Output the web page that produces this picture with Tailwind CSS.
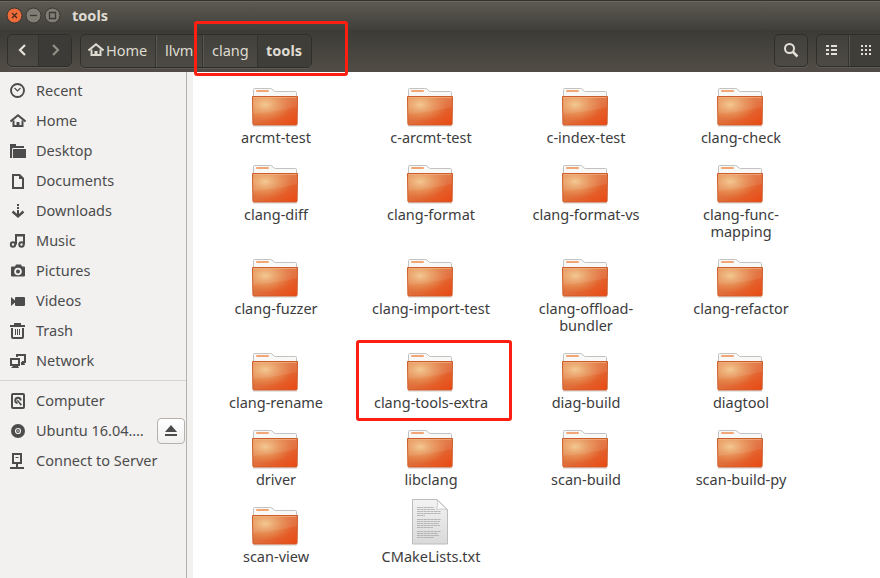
<!DOCTYPE html>
<html lang="en">
<head>
<meta charset="utf-8">
<title>tools</title>
<script src="https://cdn.jsdelivr.net/npm/@tailwindcss/browser@4"></script>
</head>
<body class="relative w-[880px] h-[578px] overflow-hidden bg-white font-['Noto_Sans','Open_Sans',sans-serif] text-[14.5px]">
<svg class="absolute w-0 h-0" aria-hidden="true">
  <defs>
    <linearGradient id="fg" x1="0" y1="0" x2="1" y2="1"><stop offset="0" stop-color="#e5844a"/><stop offset=".5" stop-color="#e06e3a"/><stop offset="1" stop-color="#ea4711"/></linearGradient>
    <radialGradient id="fr" cx=".28" cy=".28" r=".62"><stop offset="0" stop-color="#f5d297" stop-opacity=".85"/><stop offset="1" stop-color="#eda45e" stop-opacity="0"/></radialGradient>
    <linearGradient id="pg" x1="0" y1="0" x2="0" y2="1"><stop offset="0" stop-color="#f3f3f3"/><stop offset="1" stop-color="#d9d9d9"/></linearGradient>
  </defs>
  <symbol id="folder" viewBox="0 0 48 48">
    <path d="M2.500 16V7.500q0-1 1-1h16q1.500 0 2.500 1.500t2.500 1.500h20q1 0 1 1V16z" fill="#f8f8f7" stroke="#c3c2c0"/>
    <rect x="5" y="8" width="13" height="2" rx="1" fill="#f2a676"/>
    <rect x="2" y="43.300" width="44" height="1.500" fill="#000" opacity=".13"/>
    <path d="M1.500 14.500h45l-.4 27.500q0 1-1 1H2.900q-1 0-1-1z" fill="url(#fg)" stroke="#cd5c2b"/>
    <path d="M2 15h44l-.4 27.500H2.400z" fill="url(#fr)"/>
    <path d="M2 15h44v10Q31 29 2.300 32z" fill="#fff" opacity=".08"/>
    <path d="M2.500 15.500h43" stroke="#f4b98a" opacity=".6"/>
  </symbol>
  <symbol id="page" viewBox="0 0 48 48">
    <path d="M6.500 1.500h24.500l10.500 10v34.500h-35z" fill="url(#pg)" stroke="#bcbcbc"/>
    <path d="M31 2q1.500 5-.5 9.500 6-1.500 11 .5z" fill="#fafafa" stroke="#c4c4c4" stroke-width=".8"/>
    <path d="M11 9.500h17M11 11.500h18M11 13.500h24M11 15.500h24M11 17.500h8M11 21.500h24M11 23.500h23M11 25.500h22M11 27.500h23M11 29.500h16M11 33.500h24M11 35.500h21M11 37.500h22M11 39.500h17" stroke="#a8a8a8" stroke-width=".8" stroke-dasharray="3 .4"/>
  </symbol>
  <symbol id="home" viewBox="0 0 16 16"><path d="M.5 8.500 8 2.300l7.500 6.200" fill="none" stroke="currentColor" stroke-width="2"/><path d="M3.500 7.500V13h9V7.500" fill="none" stroke="currentColor" stroke-width="2"/><path d="M6.500 9h3v4h-3z" fill="currentColor"/></symbol>
</svg>

<div class="flex h-full flex-col">
  <header class="h-[72px] shrink-0 bg-[#3c3b37] text-[#dfdbd2]">
    <div class="flex h-[30px] items-center border-t border-[#33322e] bg-linear-to-b from-[#5e5b52] to-[#403f3a] pl-[6px] shadow-[inset_0_1px_0_#6a675e]">
      <svg class="h-[18px] w-[56px]" viewBox="0 0 56 18" fill="none">
        <circle cx="8.500" cy="8.500" r="7.500" fill="#ee6b3a" stroke="#37352f"/><path d="m6 6 5 5m0-5-5 5" stroke="#4a2a1c" stroke-width="1.300"/>
        <circle cx="27.500" cy="8.500" r="7.500" fill="#807d74" stroke="#37352f"/><path d="M24 8.500h7" stroke="#3a3935" stroke-width="1.300"/>
        <circle cx="46.500" cy="8.500" r="7.500" fill="#807d74" stroke="#37352f"/><path d="M43.500 5.500h6v6h-6z" stroke="#3a3935" stroke-width="1.300"/>
      </svg>
      <div class="mb-[2px] ml-[10px] leading-[20px] font-bold">tools</div>
    </div>
    <div class="flex h-[42px] items-start bg-linear-to-b from-[#3c3b37] to-[#514d46] pt-[4px] pl-[7px]">
      <div class="flex h-[33px] w-[65px] shrink-0 overflow-hidden rounded-[5px] border border-[#2f2e2a] bg-linear-to-b from-[#42413c] to-[#4c4a43] shadow-[0_1px_0_#5d5a52]">
        <div class="flex w-[31px] items-center justify-center border-r border-[#34332f]"><svg class="mb-[2px] size-[16px]" viewBox="0 0 16 16"><path d="M10 3 5 8l5 5" fill="none" stroke="#e8e4da" stroke-width="2.200"/></svg></div>
        <div class="flex flex-1 items-center justify-center bg-[#3d3b37]"><svg class="mb-[2px] size-[16px]" viewBox="0 0 16 16"><path d="m6 3 5 5-5 5" fill="none" stroke="#928f86" stroke-width="2.200"/></svg></div>
      </div>
      <nav class="ml-[8px] flex h-[34px] w-[232px] shrink-0 items-stretch overflow-hidden rounded-[5px] border border-[#2f2e2a] bg-linear-to-b from-[#42413c] to-[#4c4a43] leading-[30px] shadow-[0_1px_0_#5d5a52]">
        <div class="flex w-[75px] items-start border-r border-[#34332f] pl-[7px]"><svg class="mt-[7px] mr-[2px] size-[16px] shrink-0"><use href="#home"/></svg>Home</div>
        <div class="w-[47px] border-r border-l border-r-[#34332f] border-l-[#5b5850] pl-[8px]">llvm</div>
        <div class="w-[55px] border-r border-l border-r-[#34332f] border-l-[#5b5850] pl-[8px]">clang</div>
        <div class="flex-1 bg-[#403e39] pl-[8px] font-bold">tools</div>
      </nav>
      <div class="ml-[462px] flex h-[33px] w-[34px] shrink-0 items-center justify-center rounded-[5px] border border-[#2f2e2a] bg-linear-to-b from-[#42413c] to-[#4c4a43] shadow-[0_1px_0_#5d5a52]"><svg class="mb-[2px] size-[16px]" viewBox="0 0 16 16" fill="none" stroke="#e4e0d7"><circle cx="6.500" cy="6.500" r="4.500" stroke-width="2"/><path d="m10 10 4.500 4.500" stroke-width="2.500"/></svg></div>
      <div class="ml-[8px] flex h-[33px] w-[66px] shrink-0 overflow-hidden rounded-l-[5px] border border-[#2f2e2a] bg-linear-to-b from-[#42413c] to-[#4c4a43] shadow-[0_1px_0_#5d5a52]">
        <div class="w-[32px] border-r border-[#34332f] pt-[10px] pl-[9px]"><svg class="h-[10px] w-[11px]" viewBox="0 0 11 10" fill="#e4e0d7"><path d="M0 0h3v2H0zM5 0h6v2H5zM0 4h3v2H0zM5 4h6v2H5zM0 8h3v2H0zM5 8h6v2H5z"/></svg></div>
        <div class="flex-1 border-l border-[#59564e] bg-[#403e39] pt-[10px] pl-[11px]"><svg class="h-[10px] w-[10px]" viewBox="0 0 10 10" fill="#e4e0d7"><path d="M0 0h2v2H0zM4 0h2v2H4zM8 0h2v2H8zM0 4h2v2H0zM4 4h2v2H4zM8 4h2v2H8zM0 8h2v2H0zM4 8h2v2H4zM8 8h2v2H8z"/></svg></div>
      </div>
    </div>
  </header>

  <div class="flex min-h-0 flex-1">
    <aside class="w-[187px] shrink-0 border-r border-[#b4b2ae] bg-[#f2f1f0] pt-[4px] text-[#4c4c4c]">
      <ul id="places"></ul>
      <div class="mt-[4px] mb-[5px] h-px bg-[#d6d4d1]"></div>
      <ul id="devices"></ul>
    </aside>
    <div class="w-[6px] shrink-0 bg-[#f2f1f0]"></div>
    <main id="files" class="grid flex-1 auto-rows-min grid-cols-[155px_155px_155px_155px] content-start pt-[10px] pl-[5px] text-[#3c3c3c]"></main>
  </div>
</div>

<div class="absolute top-[21px] left-[194px] h-[55px] w-[154px] rounded-[3px] border-[3px] border-[#ff1e12]"></div>
<div class="absolute top-[340px] left-[356px] h-[81px] w-[156px] rounded-[3px] border-[3px] border-[#ff1e12]"></div>

<script>
const S = 'fill="none" stroke="currentColor" stroke-width="2"';
const F = 'fill="currentColor"';
// [label, icon markup, ejectable]
const places = [
  ['Recent', `<circle cx="7.500" cy="7.500" r="6.500" fill="none" stroke="currentColor" stroke-width="1.900"/><path d="M4.500 5 7.500 8l3-3" fill="none" stroke="currentColor" stroke-width="1.200"/>`],
  ['Home', '<use href="#home"/>'],
  ['Desktop', `<path ${F} d="M0 1h6v2h8v2H3v10H0zM3 6h13v9H3z"/><path d="M2.500 15V5.500H16" fill="none" stroke="#f2f1f0" stroke-width=".9"/>`],
  ['Documents', `<path ${S} d="M3 2h6.500L13 5.500V15H3z"/><path ${F} d="M9 1v5h5z"/>`],
  ['Downloads', `<path ${F} d="M7 1h2v2H7zM7 4h2v2H7zM7 7h2v6H7z"/><path d="m2.500 8.500 5.500 4.800 5.500-4.800" fill="none" stroke="currentColor" stroke-width="2.400"/>`],
  ['Music', `<circle cx="3" cy="11.500" r="2.200" ${S}/><circle cx="11.500" cy="11.500" r="2.200" ${S}/><path ${S} d="M6 11.500V2h8v9.500"/><path ${F} d="M5 1h10v2.500H5z"/>`],
  ['Pictures', `<path ${F} fill-rule="evenodd" d="M1 4.500q0-1 1-1h3l1-2h5l1 2h2q1 0 1 1v8q0 1-1 1H2q-1 0-1-1zM8 4.700a3.800 3.800 0 1 0 0 7.600 3.800 3.800 0 0 0 0-7.600z"/><circle cx="8" cy="8.500" r="2" ${F}/>`],
  ['Videos', `<path ${F} d="M1 4v9l4-3.500v-2zM5 5q0-1 1-1h8q1 0 1 1v7q0 1-1 1H6q-1 0-1-1z"/>`],
  ['Trash', `<path d="M0 3h15M4 1h7" ${S}/><path ${S} d="M2 5v9q0 1 1 1h9q1 0 1-1V5"/><path d="M5.500 6v6M7.500 6v6M9.500 6v6" stroke="currentColor"/>`],
  ['Network', `<path ${S} d="M1 6h8v6H1zM7 4V2h8v7h-3"/><path ${F} d="M3 13h5l1 2H1zM11 9h3l1 3h-4z"/>`],
];
const devices = [
  ['Computer', `<rect x="2" y="1" width="12" height="14" rx="1" ${S}/><path ${S} d="M7.500 10.200A2.700 2.700 0 1 1 10.700 7.500"/><path ${F} d="m7.500 6.500 4.500 5-1.300 1.200L7 8z"/>`],
  ['Ubuntu 16.04.…', `<circle cx="8" cy="8" r="7" ${F}/><circle cx="8" cy="8" r="2.500" fill="none" stroke="#f2f1f0" stroke-width="1.200"/><circle cx="8" cy="8" r=".8" fill="#f2f1f0"/>`, true],
  ['Connect to Server', `<path ${S} d="M3 1h8v9H3zM7 10v5M0 15h14"/><path d="M5.500 4.500h3" stroke="currentColor"/>`],
];
const eject = '<span class="mr-px ml-auto flex h-[26px] w-[28px] items-center justify-center rounded-[4px] border border-[#b5b2ae] bg-linear-to-b from-white to-[#f1f0ef]"><svg class="h-[12px] w-[12px]" viewBox="0 0 12 12" fill="currentColor"><path d="M6 0 12 7H0zM0 9h12v2H0z"/></svg></span>';
const row = ([t, i, e]) => `<li class="flex h-[30px] items-center pl-[10px]"><svg class="mr-[10px] size-[16px] shrink-0 overflow-visible" viewBox="0 0 16 16">${i}</svg><span class="mb-[2px] whitespace-nowrap leading-[20px]">${t}</span>${e ? eject : ''}</li>`;
document.getElementById('places').innerHTML = places.map(row).join('');
document.getElementById('devices').innerHTML = devices.map(row).join('');

const files = [
  ['arcmt-test'], ['c-arcmt-test'], ['c-index-test'], ['clang-check'],
  ['clang-diff'], ['clang-format'], ['clang-format-vs'], ['clang-func-', 'mapping'],
  ['clang-fuzzer'], ['clang-import-test'], ['clang-offload-', 'bundler'], ['clang-refactor'],
  ['clang-rename'], ['clang-tools-extra'], ['diag-build'], ['diagtool'],
  ['driver'], ['libclang'], ['scan-build'], ['scan-build-py'],
  ['scan-view'], ['CMakeLists.txt'],
];
document.getElementById('files').innerHTML = files.map(lines => {
  const txt = lines[0].endsWith('.txt');
  return `<figure class="flex flex-col items-center pb-[13px]"><svg class="mr-px size-[48px] ${txt ? '-mt-[3px] mb-[2px]' : '-mb-px'}"><use href="#${txt ? 'page' : 'folder'}"/></svg><figcaption class="pl-px text-center leading-[17px] whitespace-nowrap">${lines.join('<br>')}</figcaption></figure>`;
}).join('');
</script>
</body>
</html>
